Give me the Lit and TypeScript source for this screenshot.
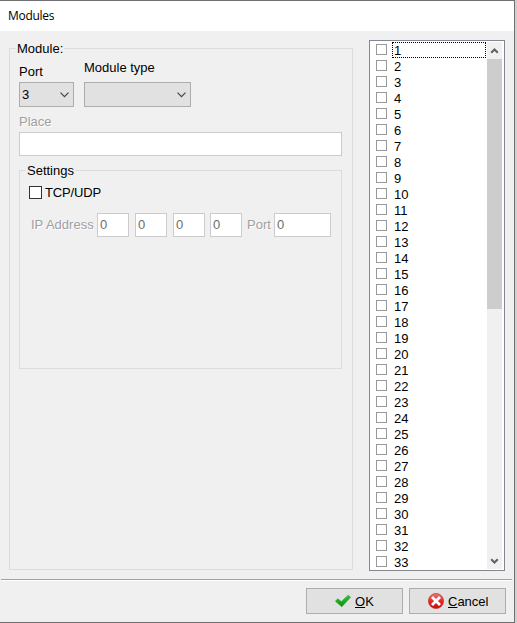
import { LitElement, html, css, svg } from "lit";
import { customElement, property } from "lit/decorators.js";

const chevron = svg`<svg width="9" height="6" viewBox="0 0 9 6"><path d="M.5 .7 4.5 4.7 8.5 .7" fill="none" stroke="#444" stroke-width="1.2"/></svg>`;

@customElement("combo-box")
class ComboBox extends LitElement {
  @property() value = "";
  static styles = css`
    :host { display: flex; box-sizing: border-box; height: 25px; border: 1px solid #adadad; background: #e1e1e1;
      align-items: center; justify-content: space-between; padding: 0 4px 0 2px; }
    svg { display: block; }
  `;
  render() {
    return html`<span>${this.value}</span>${chevron}`;
  }
}

@customElement("group-box")
class GroupBox extends LitElement {
  @property() caption = "";
  static styles = css`
    :host { display: block; box-sizing: border-box; border: 1px solid #dcdcdc; }
    .caption { display: block; width: max-content; height: 16px; line-height: 17px; margin: -9px 0 0 6px; padding: 0 1px; background: #f0f0f0; }
  `;
  render() {
    return html`<span class="caption">${this.caption}</span><slot></slot>`;
  }
}

@customElement("module-list")
class ModuleList extends LitElement {
  static styles = css`
    :host { display: flex; box-sizing: border-box; width: 136px; height: 531px; border: 1px solid #828790; background: #fff; padding: 1px 2px 1px 1px; }
    .rows { flex: 1; overflow: hidden; }
    .row { display: flex; height: 16px; padding-left: 5px; }
    .check { box-sizing: border-box; width: 11px; height: 11px; margin-top: 2px; border: 1px solid #999; }
    .label { box-sizing: border-box; width: 94px; height: 16px; margin-left: 5px; padding: 1px 0 0 2px; line-height: 16px; }
    .focused { border: 1px dotted #000; padding: 0 0 0 1px; }
    .bar { width: 15px; margin-left: 1px; background: #f0f0f0; display: flex; flex-direction: column; }
    .arrow { height: 17px; display: flex; align-items: center; justify-content: center; }
    .thumb { height: 250px; background: #cdcdcd; }
    .space { flex: 1; }
  `;
  render() {
    const rows = Array.from({ length: 33 }, (_, i) => i + 1);
    return html`
      <div class="rows">
        ${rows.map((n) => html`<div class="row"><span class="check"></span><span class="label ${n === 1 ? "focused" : ""}">${n}</span></div>`)}
      </div>
      <div class="bar">
        <div class="arrow"><svg width="9" height="8" viewBox="0 0 9 8"><path d="M1.2 5.8 4.5 2.5 7.8 5.8" fill="none" stroke="#606060" stroke-width="2"/></svg></div>
        <div class="thumb"></div>
        <div class="space"></div>
        <div class="arrow"><svg width="9" height="8" viewBox="0 0 9 8"><path d="M1.2 2.2 4.5 5.5 7.8 2.2" fill="none" stroke="#606060" stroke-width="2"/></svg></div>
      </div>`;
  }
}

@customElement("app-root")
class AppRoot extends LitElement {
  static styles = css`
    :host { display: block; box-sizing: border-box; width: 517px; height: 623px; overflow: hidden; background: #d0d0d0;
      font: 13px "Liberation Sans", Arial, sans-serif; color: #000; white-space: nowrap; }
    .window { box-sizing: border-box; width: 515px; height: 623px; background: #f0f0f0;
      border: solid #707070; border-width: 1px 1px 1px 0; display: flex; flex-direction: column; }
    .title { height: 30px; line-height: 30px; padding-left: 8px; background: #fff; font-family: "Open Sans", "Noto Sans", sans-serif; font-size: 12px; letter-spacing: -.3px; }
    .main { display: flex; height: 548px; box-sizing: border-box; padding: 9px 0 0 9px; }
    .module { width: 344px; height: 522px; margin-top: 8px; margin-right: 16px; }
    .combos { display: flex; gap: 10px; height: 51px; padding-left: 9px; align-items: flex-end; }
    .field-label { height: 15px; line-height: 15px; }
    .port .field-label { margin-bottom: 3px; }
    .type .field-label { margin-bottom: 7px; }
    .port combo-box { width: 55px; }
    .type combo-box { width: 107px; }
    .dim { color: #a0a0a0; text-shadow: 1px 1px 0 #fff; }
    .place-label { height: 15px; line-height: 15px; margin: 7px 0 3px 9px; }
    .input { box-sizing: border-box; height: 24px; border: 1px solid #ccc; background: #fff; color: #6d6d6d; line-height: 21px; padding-left: 2px; }
    .place { width: 323px; margin-left: 9px; }
    .settings { width: 323px; height: 199px; margin: 14px 0 0 9px; }
    .option { display: flex; align-items: center; height: 15px; margin: 7px 0 0 9px; letter-spacing: -.15px; }
    .check { box-sizing: border-box; width: 13px; height: 13px; border: 1px solid #333; background: #fff; margin-right: 3px; }
    .address { display: flex; align-items: center; margin: 13px 0 0 11px; }
    .ip-label, .port-label { height: 24px; line-height: 23px; }
    .ip-label { width: 66px; }
    .octets { display: grid; grid-template-columns: 38px 38px 37px 37px; }
    .octets .input { width: 32px; }
    .port-label { width: 27px; }
    .port-number { width: 57px; }
    .rule { width: 511px; height: 2px; box-sizing: border-box; margin-left: 1px; border-top: 1px solid #a0a0a0; border-bottom: 1px solid #fff; }
    .actions { display: flex; justify-content: flex-end; gap: 6px; padding: 7px 8px 0 0; }
    .button { box-sizing: border-box; width: 97px; height: 26px; border: 1px solid #adadad; background: #e1e1e1; display: flex; align-items: center; }
    .button svg { display: block; margin-right: 4px; }
    .ok { padding-left: 28px; }
    .cancel { padding-left: 18px; }
    u { text-underline-offset: 1px; text-decoration-thickness: 1px; text-decoration-skip-ink: none; }
  `;
  render() {
    return html`
      <div class="window">
        <div class="title">Modules</div>
        <div class="main">
          <group-box class="module" caption="Module:">
            <div class="combos">
              <div class="port"><div class="field-label">Port</div><combo-box value="3"></combo-box></div>
              <div class="type"><div class="field-label">Module type</div><combo-box></combo-box></div>
            </div>
            <div class="place-label dim">Place</div>
            <div class="input place"></div>
            <group-box class="settings" caption="Settings">
              <div class="option"><span class="check"></span>TCP/UDP</div>
              <div class="address">
                <span class="ip-label dim">IP Address</span>
                <div class="octets">${[0, 0, 0, 0].map((n) => html`<div class="input">${n}</div>`)}</div>
                <span class="port-label dim">Port</span>
                <div class="input port-number">0</div>
              </div>
            </group-box>
          </group-box>
          <module-list></module-list>
        </div>
        <div class="rule"></div>
        <div class="actions">
          <div class="button ok">
            <svg width="16" height="16" viewBox="0 0 16 16">
              <defs><linearGradient id="leaf" x2="0" y2="1"><stop offset="0" stop-color="#35c936"/><stop offset="1" stop-color="#07900b"/></linearGradient></defs>
              <path d="M.4 8.3 2.7 5.8 6.4 8.6 13.2 2.2 15.6 4.3 6.8 13.8Z" fill="url(#leaf)" stroke="#20a822" stroke-width=".6" stroke-linejoin="round"/>
            </svg><span><u>O</u>K</span>
          </div>
          <div class="button cancel">
            <svg width="16" height="16" viewBox="0 0 16 16">
              <defs><linearGradient id="ruby" x2="0" y2="1"><stop offset="0" stop-color="#f0776c"/><stop offset=".5" stop-color="#dd2d28"/><stop offset="1" stop-color="#c90d10"/></linearGradient></defs>
              <circle cx="8" cy="8" r="7.6" fill="url(#ruby)" stroke="#c8201e" stroke-width=".6"/>
              <path d="M4 4 12 12M12 4 4 12" stroke="#fff" stroke-width="2.8"/>
            </svg><span><u>C</u>ancel</span>
          </div>
        </div>
      </div>`;
  }
}
